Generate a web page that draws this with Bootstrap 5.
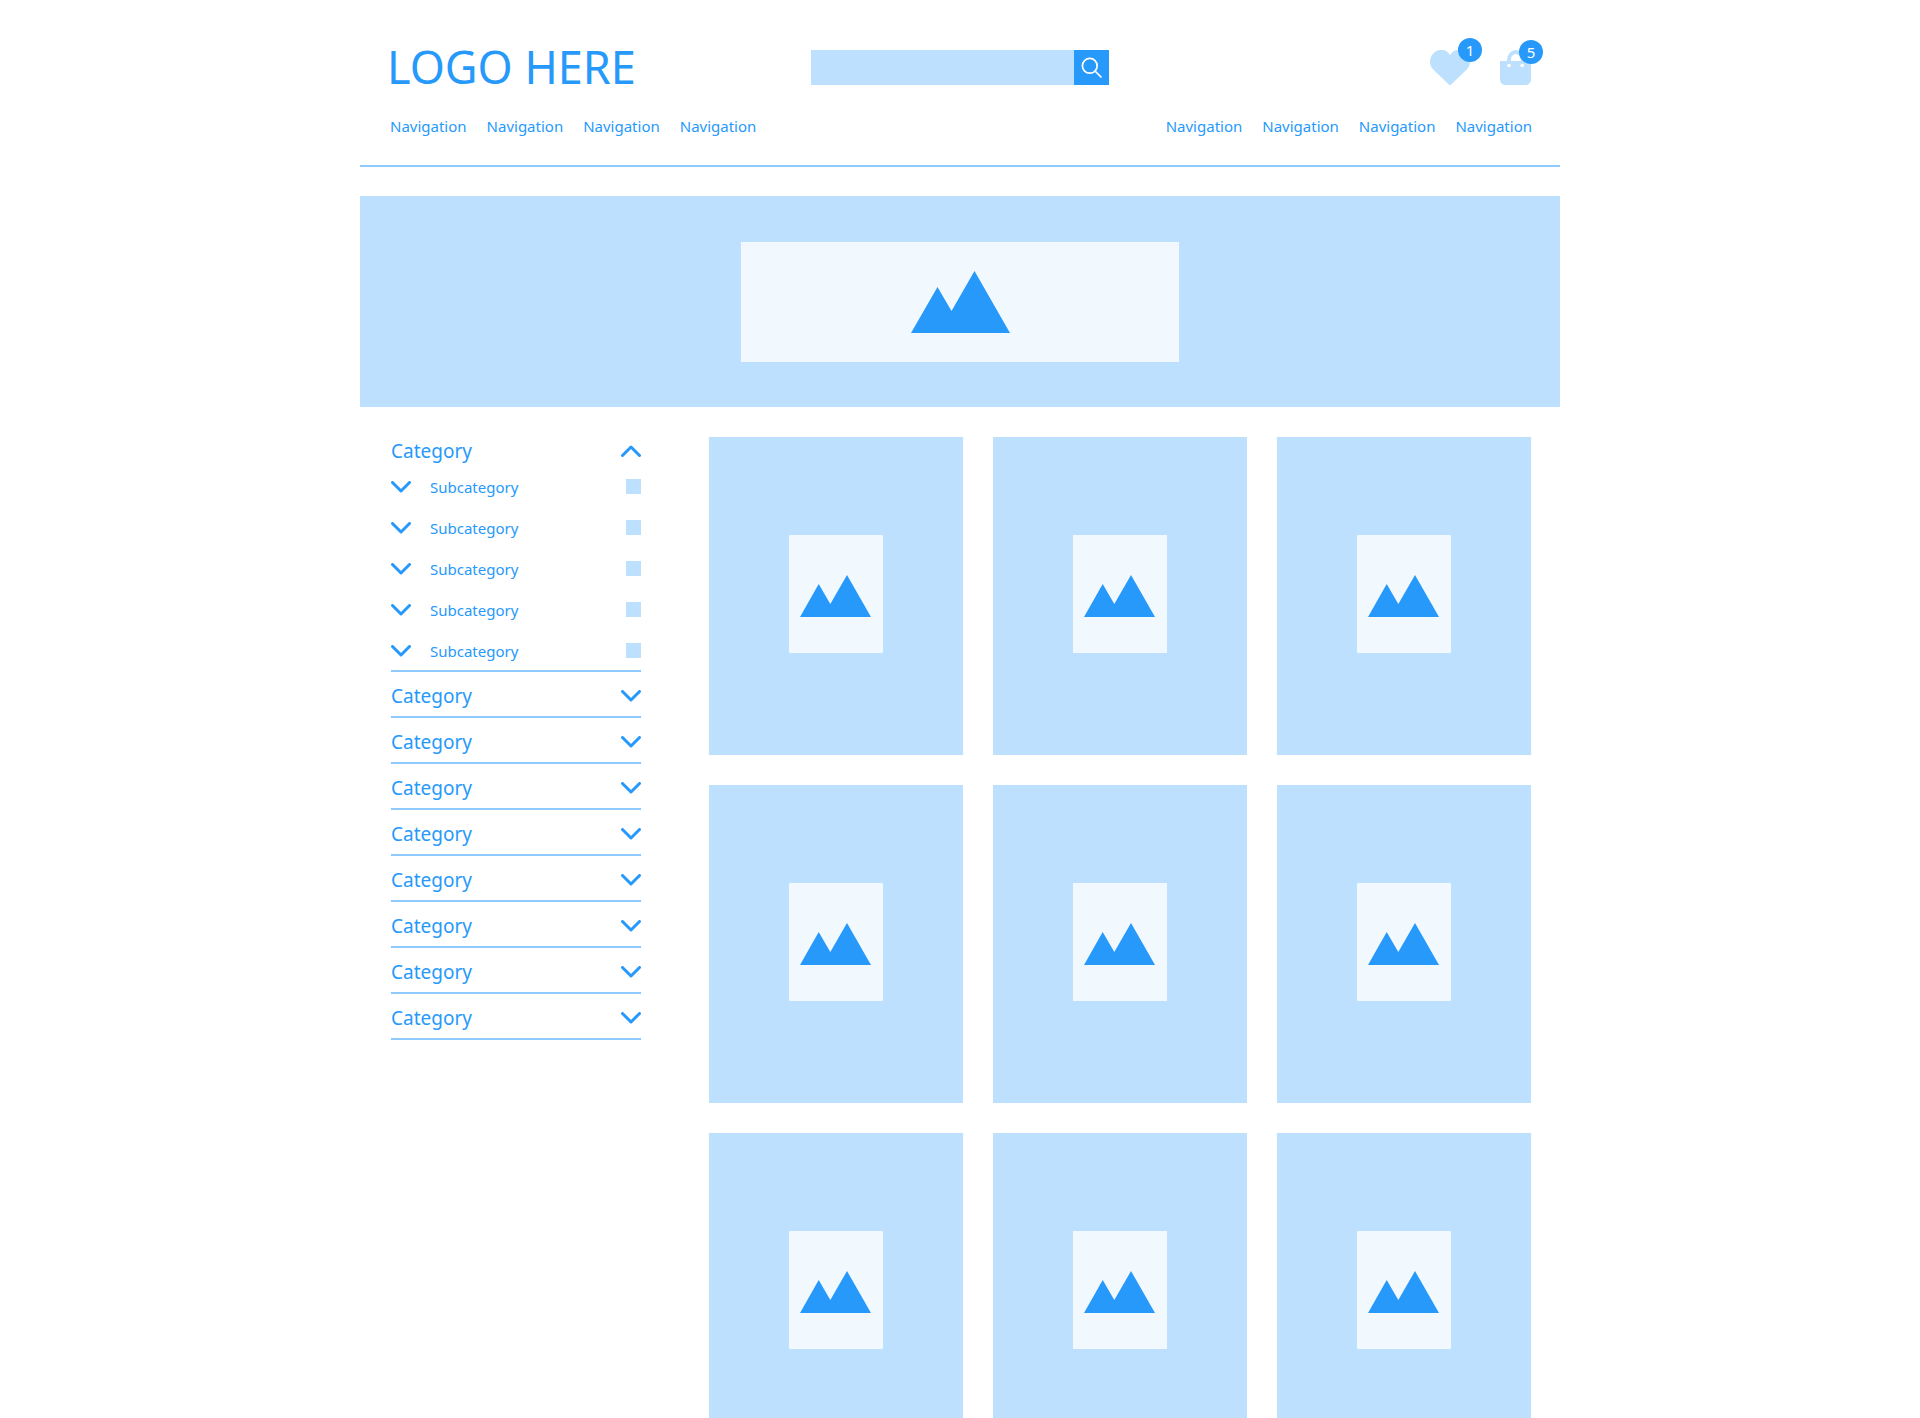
<!DOCTYPE html>
<html lang="en">
<head>
<meta charset="utf-8">
<meta name="viewport" content="width=device-width, initial-scale=1">
<title>Shop category</title>
<link href="https://cdn.jsdelivr.net/npm/bootstrap@5.3.0/dist/css/bootstrap.min.css" rel="stylesheet">
<style>
:root { --brand: #2699fb; --soft: #bce0fd; --pale: #f1f9ff; --rule: #8ecafd; }
body { font-family: "Noto Sans", "Open Sans", sans-serif; font-size: 15px; line-height: 24px; color: var(--brand); background: #fff; }
a, a:hover { color: inherit; text-decoration: none; }
.page { max-width: 1200px; }
.site-header { padding: 42px 0 27px; border-bottom: 2px solid var(--rule); }
.topbar { padding: 0 27px; min-height: 50px; }
.site-logo { font-size: 45px; line-height: 48px; }
.search { width: 298px; height: 35px; }
.search input { background: var(--soft); border: 0; border-radius: 0; color: var(--brand); }
.search button { width: 35px; background: var(--brand); }
.plain-btn { background: none; border: 0; padding: 0; color: inherit; }
.icon-links { gap: 30px; }
.count { width: 24px; height: 24px; font-size: 15px; background: var(--brand); color: #fff; }
.count-heart { left: 28px; top: -12px; }
.count-bag { left: 19px; top: -10px; }
.site-nav { padding: 0 28px 0 30px; margin-top: 22px; }
.site-nav ul { gap: 20px; }
.hero { margin-top: 29px; padding: 46px 16px 45px; background: var(--soft); }
.hero-picture { width: 438px; height: 120px; background: var(--pale); }
.content { padding: 30px 29px 0 31px; gap: 68px; }
.filters { width: 250px; }
.cat-head { font-size: 19px; line-height: 28px; }
.cat-row { height: 46px; padding-top: 3px; border-bottom: 2px solid var(--rule); }
.sub-list { border-bottom: 2px solid var(--rule); }
.sub-item { height: 41px; padding-top: 2px; gap: 19px; }
.tick { appearance: none; width: 15px; height: 15px; background: var(--soft); margin: 0; }
.tick:checked { background: var(--brand); }
.products { display: grid; grid-template-columns: repeat(auto-fill, minmax(250px, 1fr)); gap: 30px; }
.product { height: 318px; padding-bottom: 4px; background: var(--soft); }
.product-picture { width: 94px; height: 118px; padding: 4px 2px 0 0; background: var(--pale); }
svg { display: block; flex: none; }
@media (min-width: 1200px) { body { height: 100vh; overflow-y: hidden; } }
</style>
<script src="https://cdn.jsdelivr.net/npm/bootstrap@5.3.0/dist/js/bootstrap.bundle.min.js"></script>
</head>
<body>
<svg width="0" height="0" class="position-absolute" aria-hidden="true">
  <symbol id="down" viewBox="0 0 20 12"><path d="M1.500 1.500 10 10l8.500-8.500" fill="none" stroke="currentColor" stroke-width="3" stroke-linecap="round" stroke-linejoin="round"/></symbol>
  <symbol id="up" viewBox="0 0 20 12"><path d="M1.500 10.500 10 2l8.500 8.500" fill="none" stroke="currentColor" stroke-width="3" stroke-linecap="round" stroke-linejoin="round"/></symbol>
  <symbol id="hills" viewBox="0 0 71 42"><path d="M0 42 18.700 9 30.300 29 47 0 71 42z" fill="currentColor"/></symbol>
</svg>
<div class="page container-fluid p-0">
  <header class="site-header">
    <div class="topbar d-flex flex-wrap align-items-center">
      <div class="flex-fill w-25"><a class="site-logo text-nowrap" href="#">LOGO HERE</a></div>
      <form class="search d-flex" role="search">
        <input class="form-control shadow-none h-100" type="search" aria-label="Search">
        <button class="plain-btn d-flex align-items-center justify-content-center flex-shrink-0" type="button" aria-label="Search">
          <svg width="21" height="21" viewBox="0 0 21 21" fill="none" stroke="#fff" stroke-width="1.700" stroke-linecap="round"><circle cx="8.800" cy="8.800" r="7.400"/><path d="m14 14 6 6"/></svg>
        </button>
      </form>
      <div class="icon-links flex-fill w-25 d-flex justify-content-end">
        <a class="position-relative" href="#" aria-label="Favourites">
          <svg width="40" height="35" viewBox="0 0 40 35"><path fill="#bce0fd" d="M20 5.200C23-1 31-1.800 36 2.800c5 4.600 5.300 12 .8 16.700L21.200 34.600q-1.200.9-2.400 0L3.200 19.500C-1.300 14.800-1 7.400 4 2.800 9-1.800 17-1 20 5.200z"/></svg>
          <span class="count count-heart position-absolute rounded-circle d-flex align-items-center justify-content-center">1</span>
        </a>
        <a class="position-relative" href="#" aria-label="Basket">
          <svg width="33" height="35" viewBox="0 0 33 35"><path d="M9 15V9.500a6.800 7.500 0 0 1 13.600 0V15" fill="none" stroke="#bce0fd" stroke-width="3.800"/><path fill="#bce0fd" d="M0 11h31v18.500a5.500 5.500 0 0 1-5.500 5.500h-20A5.500 5.500 0 0 1 0 29.500z"/><g fill="#fff"><circle cx="9" cy="15.500" r="1.800"/><circle cx="22.200" cy="15.500" r="1.800"/></g></svg>
          <span class="count count-bag position-absolute rounded-circle d-flex align-items-center justify-content-center">5</span>
        </a>
      </div>
    </div>
    <nav class="site-nav d-flex flex-wrap justify-content-between" aria-label="Main">
      <ul class="list-unstyled d-flex flex-wrap m-0">
        <li><a href="#">Navigation</a></li><li><a href="#">Navigation</a></li><li><a href="#">Navigation</a></li><li><a href="#">Navigation</a></li>
      </ul>
      <ul class="list-unstyled d-flex flex-wrap m-0">
        <li><a href="#">Navigation</a></li><li><a href="#">Navigation</a></li><li><a href="#">Navigation</a></li><li><a href="#">Navigation</a></li>
      </ul>
    </nav>
  </header>

  <section class="hero d-flex justify-content-center" aria-label="Banner">
    <div class="hero-picture d-flex align-items-center justify-content-center"><svg width="99" height="62" viewBox="0 0 99 62"><path d="M0 62 26.500 16 40.500 40 63.500 0 99 62z" fill="currentColor"/></svg></div>
  </section>

  <div class="content d-flex flex-wrap flex-lg-nowrap align-items-start">
    <aside class="filters flex-shrink-0">
      <button class="plain-btn cat-head w-100 d-flex align-items-center justify-content-between" type="button" data-bs-toggle="collapse" data-bs-target="#subs" aria-expanded="true">Category<svg width="20" height="12"><use href="#up"/></svg></button>
      <div class="sub-list collapse show" id="subs">
        <div class="sub-item d-flex align-items-center"><button class="plain-btn" type="button" aria-label="Expand"><svg width="20" height="12"><use href="#down"/></svg></button><label class="flex-fill" for="s1">Subcategory</label><input class="tick" type="checkbox" id="s1"></div>
        <div class="sub-item d-flex align-items-center"><button class="plain-btn" type="button" aria-label="Expand"><svg width="20" height="12"><use href="#down"/></svg></button><label class="flex-fill" for="s2">Subcategory</label><input class="tick" type="checkbox" id="s2"></div>
        <div class="sub-item d-flex align-items-center"><button class="plain-btn" type="button" aria-label="Expand"><svg width="20" height="12"><use href="#down"/></svg></button><label class="flex-fill" for="s3">Subcategory</label><input class="tick" type="checkbox" id="s3"></div>
        <div class="sub-item d-flex align-items-center"><button class="plain-btn" type="button" aria-label="Expand"><svg width="20" height="12"><use href="#down"/></svg></button><label class="flex-fill" for="s4">Subcategory</label><input class="tick" type="checkbox" id="s4"></div>
        <div class="sub-item d-flex align-items-center"><button class="plain-btn" type="button" aria-label="Expand"><svg width="20" height="12"><use href="#down"/></svg></button><label class="flex-fill" for="s5">Subcategory</label><input class="tick" type="checkbox" id="s5"></div>
      </div>
      <button class="plain-btn cat-head cat-row w-100 d-flex align-items-center justify-content-between" type="button">Category<svg width="20" height="12"><use href="#down"/></svg></button>
      <button class="plain-btn cat-head cat-row w-100 d-flex align-items-center justify-content-between" type="button">Category<svg width="20" height="12"><use href="#down"/></svg></button>
      <button class="plain-btn cat-head cat-row w-100 d-flex align-items-center justify-content-between" type="button">Category<svg width="20" height="12"><use href="#down"/></svg></button>
      <button class="plain-btn cat-head cat-row w-100 d-flex align-items-center justify-content-between" type="button">Category<svg width="20" height="12"><use href="#down"/></svg></button>
      <button class="plain-btn cat-head cat-row w-100 d-flex align-items-center justify-content-between" type="button">Category<svg width="20" height="12"><use href="#down"/></svg></button>
      <button class="plain-btn cat-head cat-row w-100 d-flex align-items-center justify-content-between" type="button">Category<svg width="20" height="12"><use href="#down"/></svg></button>
      <button class="plain-btn cat-head cat-row w-100 d-flex align-items-center justify-content-between" type="button">Category<svg width="20" height="12"><use href="#down"/></svg></button>
      <button class="plain-btn cat-head cat-row w-100 d-flex align-items-center justify-content-between" type="button">Category<svg width="20" height="12"><use href="#down"/></svg></button>
    </aside>
    <main class="products flex-fill">
      <a class="product d-flex align-items-center justify-content-center" href="#" aria-label="Product 1"><span class="product-picture d-flex align-items-center justify-content-center"><svg width="71" height="42"><use href="#hills"/></svg></span></a>
      <a class="product d-flex align-items-center justify-content-center" href="#" aria-label="Product 2"><span class="product-picture d-flex align-items-center justify-content-center"><svg width="71" height="42"><use href="#hills"/></svg></span></a>
      <a class="product d-flex align-items-center justify-content-center" href="#" aria-label="Product 3"><span class="product-picture d-flex align-items-center justify-content-center"><svg width="71" height="42"><use href="#hills"/></svg></span></a>
      <a class="product d-flex align-items-center justify-content-center" href="#" aria-label="Product 4"><span class="product-picture d-flex align-items-center justify-content-center"><svg width="71" height="42"><use href="#hills"/></svg></span></a>
      <a class="product d-flex align-items-center justify-content-center" href="#" aria-label="Product 5"><span class="product-picture d-flex align-items-center justify-content-center"><svg width="71" height="42"><use href="#hills"/></svg></span></a>
      <a class="product d-flex align-items-center justify-content-center" href="#" aria-label="Product 6"><span class="product-picture d-flex align-items-center justify-content-center"><svg width="71" height="42"><use href="#hills"/></svg></span></a>
      <a class="product d-flex align-items-center justify-content-center" href="#" aria-label="Product 7"><span class="product-picture d-flex align-items-center justify-content-center"><svg width="71" height="42"><use href="#hills"/></svg></span></a>
      <a class="product d-flex align-items-center justify-content-center" href="#" aria-label="Product 8"><span class="product-picture d-flex align-items-center justify-content-center"><svg width="71" height="42"><use href="#hills"/></svg></span></a>
      <a class="product d-flex align-items-center justify-content-center" href="#" aria-label="Product 9"><span class="product-picture d-flex align-items-center justify-content-center"><svg width="71" height="42"><use href="#hills"/></svg></span></a>
    </main>
  </div>
</div>
</body>
</html>
